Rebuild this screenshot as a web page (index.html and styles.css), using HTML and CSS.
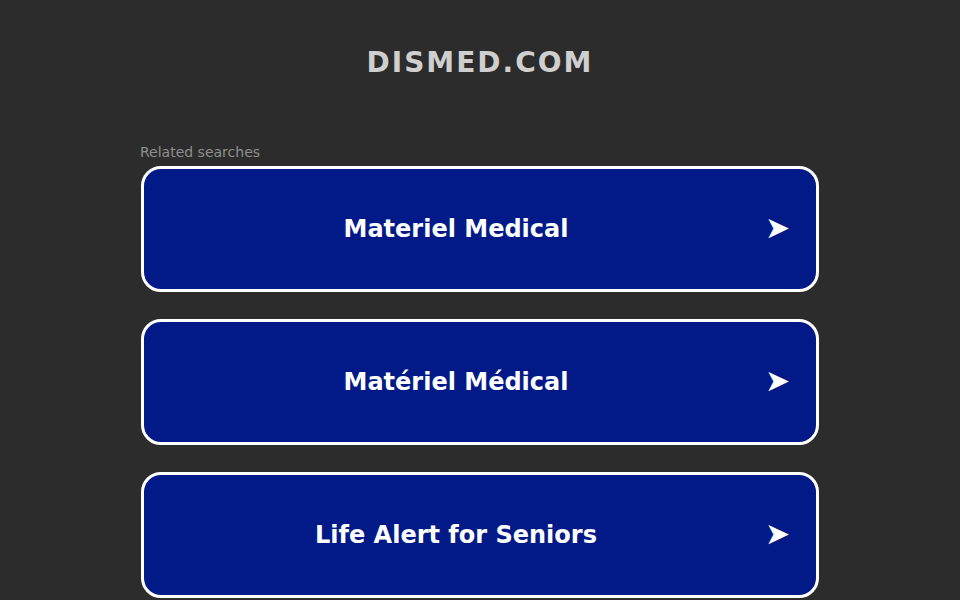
FILE: index.html
```html
<!DOCTYPE html>
<html lang="en">
<head>
  <meta charset="UTF-8">
  <meta name="viewport" content="width=device-width, initial-scale=1.0">
  <title>dismed.com</title>
  <link rel="stylesheet" href="styles.css">
</head>
<body>
<header>
  <h1>dismed.com</h1>
</header>

<div class="container">
  <p class="related">Related searches</p>

  <!-- Search links -->
  <a class="link" href="#">
    <span class="link-text">Materiel Medical</span>
    <span class="arrow">➤</span>
  </a>
  <a class="link" href="#">
    <span class="link-text">Matériel Médical</span>
    <span class="arrow">➤</span>
  </a>
  <a class="link" href="#">
    <span class="link-text">Life Alert for Seniors</span>
    <span class="arrow">➤</span>
  </a>
</div>
</body>
</html>
```

FILE: styles.css
```css
body {
  font-family: "DejaVu Sans", sans-serif;
  margin: 0;
  padding: 0;
  background-color: #2c2c2c;
}
header {
  padding-top: 44px;
  text-align: center;
}
header h1 {
  margin: 0;
  font-size: 28px;
  line-height: 38px;
  letter-spacing: 2px;
  text-transform: uppercase;
  color: #cfcfcf;
}
.container {
  width: 680px;
  margin: 0 auto;
  padding-top: 61px;
}
.related {
  margin: 0 0 5px;
  font-size: 14px;
  line-height: 18px;
  color: #8f8f8f;
}
.link {
  display: flex;
  align-items: center;
  height: 120px;
  margin: 0 0 27px 1px;
  width: 672px;
  background: #021a88;
  border: 3px solid #ffffff;
  border-radius: 20px;
  color: #ffffff;
  text-decoration: none;
}
.link-text {
  flex: 1;
  text-align: center;
  font-size: 24px;
  font-weight: bold;
}
.arrow {
  width: 48px;
  margin-top: -4px;
  font-size: 30px;
  text-indent: -3px;
}
```
